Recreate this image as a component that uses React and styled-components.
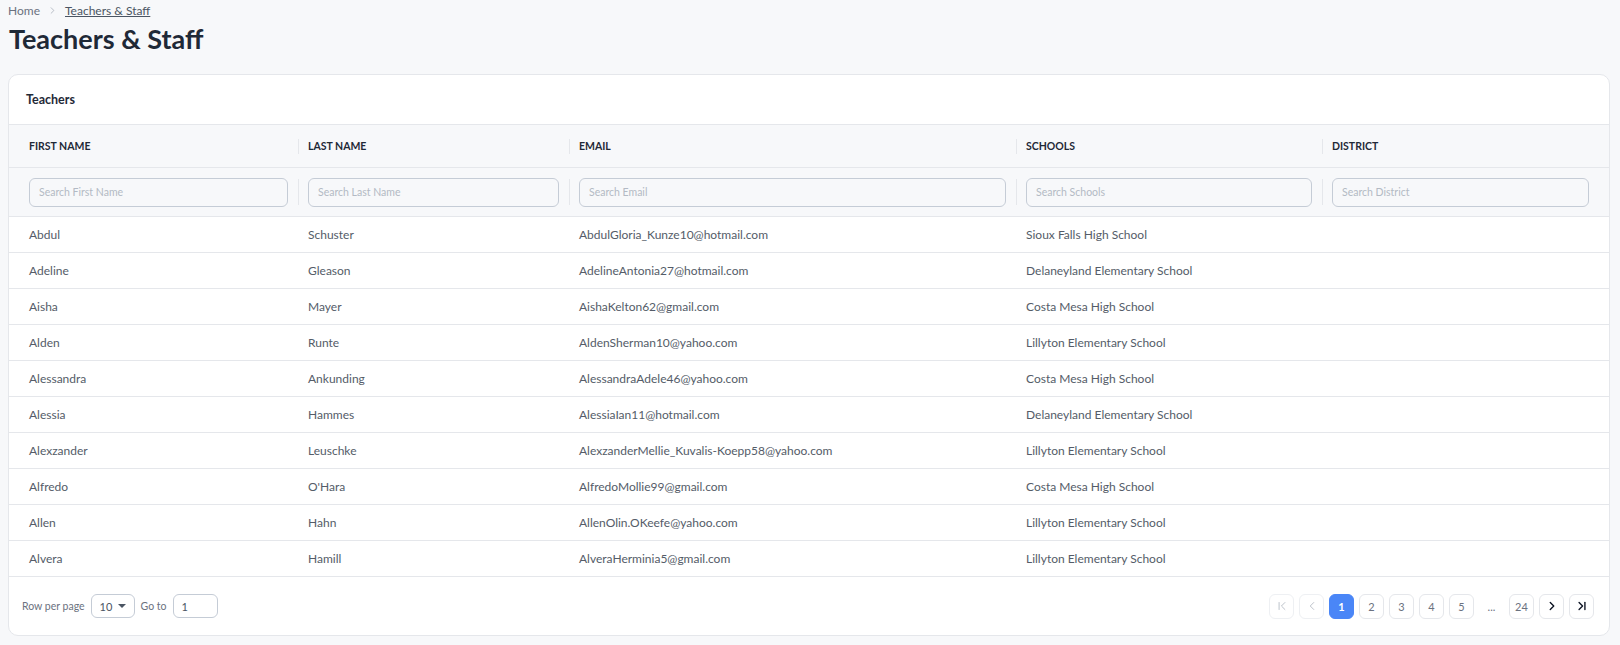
import React from "react";
import styled, { createGlobalStyle } from "styled-components";
import { ChevronFirst, ChevronLast, ChevronLeft, ChevronRight } from "lucide-react";

const teachers = [
  ["Abdul", "Schuster", "AbdulGloria_Kunze10@hotmail.com", "Sioux Falls High School"],
  ["Adeline", "Gleason", "AdelineAntonia27@hotmail.com", "Delaneyland Elementary School"],
  ["Aisha", "Mayer", "AishaKelton62@gmail.com", "Costa Mesa High School"],
  ["Alden", "Runte", "AldenSherman10@yahoo.com", "Lillyton Elementary School"],
  ["Alessandra", "Ankunding", "AlessandraAdele46@yahoo.com", "Costa Mesa High School"],
  ["Alessia", "Hammes", "AlessiaIan11@hotmail.com", "Delaneyland Elementary School"],
  ["Alexzander", "Leuschke", "AlexzanderMellie_Kuvalis-Koepp58@yahoo.com", "Lillyton Elementary School"],
  ["Alfredo", "O'Hara", "AlfredoMollie99@gmail.com", "Costa Mesa High School"],
  ["Allen", "Hahn", "AllenOlin.OKeefe@yahoo.com", "Lillyton Elementary School"],
  ["Alvera", "Hamill", "AlveraHerminia5@gmail.com", "Lillyton Elementary School"],
];

const columns = [
  { title: "First Name", placeholder: "Search First Name" },
  { title: "Last Name", placeholder: "Search Last Name" },
  { title: "Email", placeholder: "Search Email" },
  { title: "Schools", placeholder: "Search Schools" },
  { title: "District", placeholder: "Search District" },
];

const App = () => {
  return (
    <>
      <GlobalStyle />
      <Page>
        <Breadcrumb>
          <Crumb>Home</Crumb>
          <ChevronRight size={11} strokeWidth={1.5} color="#9ca3af" />
          <CrumbLink href="#">Teachers &amp; Staff</CrumbLink>
        </Breadcrumb>
        <Title>Teachers &amp; Staff</Title>
        <Card>
          <CardHeader>Teachers</CardHeader>
          <HeadRow>
            {columns.map((c, i) => (
              <HeadCell key={c.title} $divider={i > 0}>
                {c.title}
              </HeadCell>
            ))}
          </HeadRow>
          <FilterRow>
            {columns.map((c, i) => (
              <FilterCell key={c.title} $divider={i > 0}>
                <SearchInput placeholder={c.placeholder} />
              </FilterCell>
            ))}
          </FilterRow>
          {teachers.map((t) => (
            <BodyRow key={t[2]}>
              {t.map((v, i) => (
                <Cell key={i}>{v}</Cell>
              ))}
              <Cell />
            </BodyRow>
          ))}
          <Footer>
            <PerPage>
              <FooterLabel>Row per page</FooterLabel>
              <SelectBox>
                10
                <Caret />
              </SelectBox>
              <FooterLabel>Go to</FooterLabel>
              <GotoInput defaultValue="1" />
            </PerPage>
            <Pager>
              <PageButton $disabled>
                <ChevronFirst size={14} strokeWidth={1.6} />
              </PageButton>
              <PageButton $disabled>
                <ChevronLeft size={14} strokeWidth={1.6} />
              </PageButton>
              <PageButton $active>1</PageButton>
              <PageButton>2</PageButton>
              <PageButton>3</PageButton>
              <PageButton>4</PageButton>
              <PageButton>5</PageButton>
              <Ellipsis>...</Ellipsis>
              <PageButton>24</PageButton>
              <PageButton $dark>
                <ChevronRight size={14} strokeWidth={2.4} />
              </PageButton>
              <PageButton $dark>
                <ChevronLast size={14} strokeWidth={2.4} />
              </PageButton>
            </Pager>
          </Footer>
        </Card>
      </Page>
    </>
  );
};

const GlobalStyle = createGlobalStyle`
  * {
    box-sizing: border-box;
  }
  body {
    margin: 0;
    background: #f7f8fa;
    font-family: Lato, "Noto Sans", sans-serif;
    color: #4b5563;
  }
`;

const Page = styled.div`
  padding: 0 10px 10px 8px;
`;

const Breadcrumb = styled.div`
  display: flex;
  align-items: center;
  gap: 7px;
  height: 21px;
  font-size: 12px;
  color: #6b7280;
`;

const Crumb = styled.span`
  color: #6b7280;
`;

const CrumbLink = styled.a`
  color: #4b5563;
  text-decoration: underline;
`;

const Title = styled.h1`
  margin: 2px 0 0 1px;
  font-size: 27px;
  line-height: 32px;
  font-weight: 700;
  color: #1f2937;
  height: 51px;
`;

const Card = styled.div`
  background: #fff;
  border: 1px solid #e5e7eb;
  border-radius: 10px;
  overflow: hidden;
`;

const CardHeader = styled.div`
  display: flex;
  align-items: center;
  height: 50px;
  padding-left: 17px;
  font-size: 12.5px;
  font-weight: 700;
  color: #1f2937;
  border-bottom: 1px solid #e5e7eb;
`;

const Row = styled.div`
  display: grid;
  grid-template-columns: 279px 271px 447px 306px 1fr;
  padding: 0 10px;
  border-bottom: 1px solid #e5e7eb;
`;

const HeadRow = styled(Row)`
  height: 43px;
  background: #f7f8fa;
`;

const FilterRow = styled(Row)`
  height: 49px;
  background: #f7f8fa;
`;

const BodyRow = styled(Row)`
  height: 36px;
`;

const HeadCell = styled.div`
  position: relative;
  display: flex;
  align-items: center;
  padding: 0 10px;
  font-size: 10.5px;
  font-weight: 700;
  text-transform: uppercase;
  color: #1f2937;
  &::before {
    content: "";
    display: ${(p) => (p.$divider ? "block" : "none")};
    position: absolute;
    left: 0;
    top: 14px;
    height: 15px;
    border-left: 1px solid #e5e7eb;
  }
`;

const FilterCell = styled(HeadCell)`
  &::before {
    top: 11px;
    height: 26px;
  }
`;

const SearchInput = styled.input`
  width: 100%;
  height: 29px;
  border: 1px solid #c5ccd6;
  border-radius: 6px;
  background: #f7f8fa;
  padding: 0 9px;
  font-family: inherit;
  font-size: 10.5px;
  outline: none;
  &::placeholder {
    color: #b3bac4;
  }
`;

const Cell = styled.div`
  display: flex;
  align-items: center;
  padding: 0 10px;
  font-size: 12px;
  color: #545c68;
  white-space: nowrap;
`;

const Footer = styled.div`
  display: flex;
  align-items: center;
  justify-content: space-between;
  height: 58px;
  padding: 0 15px 0 13px;
`;

const PerPage = styled.div`
  display: flex;
  align-items: center;
  gap: 6px;
`;

const FooterLabel = styled.span`
  font-size: 10.5px;
  color: #6b7280;
`;

const SelectBox = styled.div`
  display: flex;
  align-items: center;
  justify-content: space-between;
  width: 44px;
  height: 24px;
  padding: 0 8px;
  border: 1px solid #c5ccd6;
  border-radius: 6px;
  font-size: 11px;
  color: #4b5563;
`;

const Caret = styled.span`
  width: 0;
  height: 0;
  border-left: 4px solid transparent;
  border-right: 4px solid transparent;
  border-top: 4px solid #4b5563;
`;

const GotoInput = styled.input`
  width: 45px;
  height: 24px;
  border: 1px solid #c5ccd6;
  border-radius: 6px;
  padding: 0 8px;
  font-family: inherit;
  font-size: 11px;
  color: #4b5563;
  outline: none;
`;

const Pager = styled.div`
  display: flex;
  align-items: center;
  gap: 5px;
`;

const PageButton = styled.button`
  display: flex;
  align-items: center;
  justify-content: center;
  width: 25px;
  height: 25px;
  padding: 0;
  border-radius: 6px;
  font-family: inherit;
  font-size: 11px;
  cursor: pointer;
  border: 1px solid ${(p) => (p.$active ? "#4a86f7" : p.$disabled ? "#eef0f3" : "#e5e7eb")};
  background: ${(p) => (p.$active ? "#4a86f7" : "#fff")};
  color: ${(p) => (p.$active ? "#fff" : p.$disabled ? "#b7bdc6" : p.$dark ? "#111827" : "#6b7280")};
  font-weight: ${(p) => (p.$active ? 700 : 400)};
`;

const Ellipsis = styled.span`
  width: 25px;
  text-align: center;
  font-size: 11px;
  color: #6b7280;
`;

export default App;
